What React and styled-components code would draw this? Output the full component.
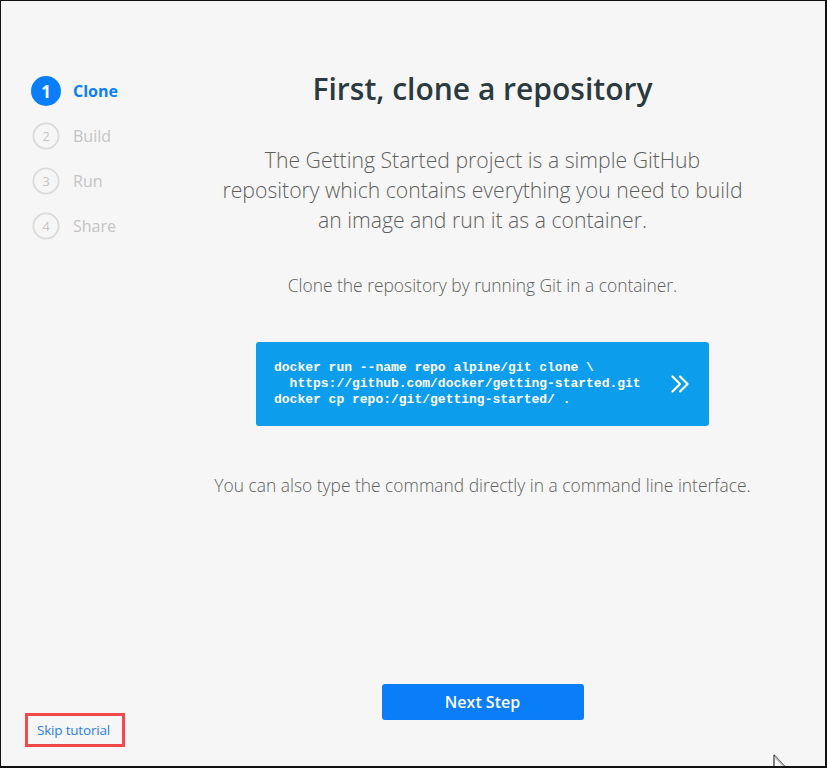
import React from "react";
import styled, { createGlobalStyle } from "styled-components";

const steps = ["Clone", "Build", "Run", "Share"];

const GlobalStyle = createGlobalStyle`
  html, body {
    margin: 0;
    padding: 0;
    background: #ffffff;
  }
  * {
    box-sizing: border-box;
  }
`;

export default function App() {
  return (
    <>
      <GlobalStyle />
      <Frame>
        <Sidebar>
          <StepList>
            {steps.map((label, i) => (
              <Step key={label}>
                <StepNum active={i === 0}>{i + 1}</StepNum>
                <StepLabel active={i === 0}>{label}</StepLabel>
              </Step>
            ))}
          </StepList>
          <SkipBox>
            <SkipLink href="#">Skip tutorial</SkipLink>
          </SkipBox>
        </Sidebar>
        <Main>
          <Title>First, clone a repository</Title>
          <Lead>
            The Getting Started project is a simple GitHub
            <br />
            repository which contains everything you need to build
            <br />
            an image and run it as a container.
          </Lead>
          <Hint>Clone the repository by running Git in a container.</Hint>
          <CodeBox>
            <Code>
              {"docker run --name repo alpine/git clone \\\n  https://github.com/docker/getting-started.git\ndocker cp repo:/git/getting-started/ ."}
            </Code>
            <RunIcon viewBox="0 0 24 24" width="26" height="26">
              <path d="M5 5l7 7-7 7M12 5l7 7-7 7" fill="none" stroke="#fff" strokeWidth="2" strokeLinecap="round" strokeLinejoin="round" />
            </RunIcon>
          </CodeBox>
          <Hint wide>You can also type the command directly in a command line interface.</Hint>
          <NextButton>Next Step</NextButton>
        </Main>
        <Cursor viewBox="0 0 20 20" width="20" height="20">
          <path d="M1 1v18M1 1l13 14" fill="none" stroke="#333" strokeWidth="1.2" />
          <path d="M1.6 2.5l11 12" stroke="#bbb" strokeWidth="1.6" />
        </Cursor>
      </Frame>
    </>
  );
}

const Frame = styled.div`
  position: relative;
  width: 827px;
  height: 768px;
  display: flex;
  background: #f6f6f6;
  border-top: 1px solid #111;
  border-left: 1px solid #111;
  border-right: 2px solid #111;
  border-bottom: 2px solid #111;
  overflow: hidden;
  font-family: "Open Sans", "Noto Sans", sans-serif;
`;

const Sidebar = styled.div`
  width: 139px;
  flex-shrink: 0;
  display: flex;
  flex-direction: column;
  justify-content: space-between;
  padding: 75px 0 19px 24px;
`;

const StepList = styled.div`
  display: flex;
  flex-direction: column;
  gap: 15px;
  padding-left: 6px;
`;

const Step = styled.div`
  display: flex;
  align-items: center;
  height: 30px;
  gap: 12px;
`;

const StepNum = styled.div`
  width: 30px;
  height: 30px;
  border-radius: 50%;
  display: flex;
  align-items: center;
  justify-content: center;
  font-size: ${(p) => (p.active ? "17px" : "14px")};
  font-weight: ${(p) => (p.active ? 700 : 400)};
  color: ${(p) => (p.active ? "#fff" : "#c4c4c4")};
  background: ${(p) => (p.active ? "#0a7ef8" : "transparent")};
  border: ${(p) => (p.active ? "none" : "2px solid #dadada")};
  transform: ${(p) => (p.active ? "none" : "scale(0.9)")};
`;

const StepLabel = styled.span`
  font-size: 16px;
  font-weight: ${(p) => (p.active ? 700 : 400)};
  color: ${(p) => (p.active ? "#0a7ef8" : "#c4c4c4")};
`;

const SkipBox = styled.div`
  width: 100px;
  height: 34px;
  border: 3px solid #f24a4a;
  display: flex;
  align-items: center;
  padding-left: 9px;
`;

const SkipLink = styled.a`
  font-size: 13.5px;
  color: #2a7fe8;
  text-decoration: none;
  letter-spacing: -0.2px;
`;

const Main = styled.div`
  flex: 1;
  display: flex;
  flex-direction: column;
  align-items: center;
  padding: 68px 0 46px;
`;

const Title = styled.h1`
  margin: 0;
  font-size: 30px;
  line-height: 40px;
  font-weight: 600;
  color: #2a3a40;
`;

const Lead = styled.p`
  margin: 36px 0 0;
  font-size: 21.2px;
  line-height: 30px;
  font-weight: 300;
  color: #5f5f5f;
  text-align: center;
`;

const Hint = styled.p`
  margin: ${(p) => (p.wide ? "48px 0 0" : "39px 0 0")};
  font-size: 17.4px;
  line-height: 22px;
  font-weight: 300;
  color: #5f5f5f;
  text-align: center;
`;

const CodeBox = styled.div`
  margin-top: 46px;
  width: 453px;
  height: 84px;
  background: #0d9ded;
  border-radius: 3px;
  display: flex;
  align-items: center;
  justify-content: space-between;
  padding: 0 16px 0 18px;
`;

const Code = styled.pre`
  margin: 0;
  font-family: "Liberation Mono", "DejaVu Sans Mono", monospace;
  font-size: 13px;
  line-height: 16px;
  font-weight: 700;
  color: #fff;
`;

const RunIcon = styled.svg`
  flex-shrink: 0;
`;

const NextButton = styled.button`
  margin-top: auto;
  width: 202px;
  height: 36px;
  border: none;
  border-radius: 3px;
  background: #0a7ef8;
  color: #fff;
  font-family: "Open Sans", "Noto Sans", sans-serif;
  font-size: 16px;
  font-weight: 600;
  cursor: pointer;
`;

const Cursor = styled.svg`
  position: absolute;
  left: 772px;
  top: 753px;
`;
